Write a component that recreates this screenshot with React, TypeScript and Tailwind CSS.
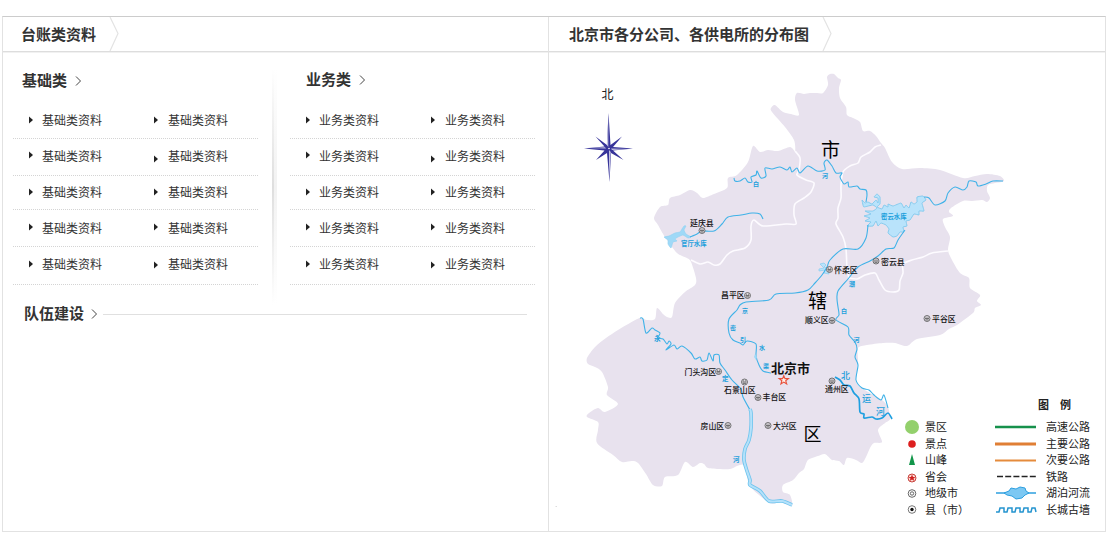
import type { ReactNode } from "react";

type Pt = [number, number];

const FONT =
  "font-['Liberation_Sans','Noto_Sans_CJK_SC',sans-serif]";

function parse(s: string): Pt[] {
  return s
    .trim()
    .split(/\s+/)
    .map((p) => p.split(",").map(Number) as Pt);
}

/* Smooth curve through every listed point. */
function curve(s: string, closed = false, tension = 0.14): string {
  const p = parse(s);
  const n = p.length;
  const at = (i: number): Pt =>
    closed ? p[(i + n) % n] : p[Math.max(0, Math.min(n - 1, i))];
  let d = `M${p[0][0]} ${p[0][1]}`;
  const last = closed ? n : n - 1;
  for (let i = 0; i < last; i++) {
    const a = at(i - 1);
    const b = at(i);
    const c = at(i + 1);
    const e = at(i + 2);
    d += `C${b[0] + (c[0] - a[0]) * tension} ${b[1] + (c[1] - a[1]) * tension} ${
      c[0] - (e[0] - b[0]) * tension
    } ${c[1] - (e[1] - b[1]) * tension} ${c[0]} ${c[1]}`;
  }
  return closed ? d + "Z" : d;
}

const OUTLINE = `830,74 834,74 838,78 841,80 839,88 840,98 846,107 847,115 853,118 860,122 863,131 870,131 876,136 881,143 885,148 892,162 902,169
920,168 940,170 963,178 975,176 987,174 1000,176 1004,181 995,183 988,185 987,191 990,198 987,202 982,200 972,201 963,201 951,208 949,212 953,216 943,219
945,227 950,237 948,250 952,260 960,273 969,278 970,288 980,295 977,301 981,305 975,308 973,313 957,325 949,329 940,335 917,339 907,346 895,343
883,343 867,345 858,348 858,360 857,371 856,382 862,388 870,393 882,400 888,407 890,419 885,423 878,430 882,442 874,443 870,448 866,457 862,463 856,460 847,458 844,465 839,461
832,460 825,454 818,456 808,460 804,469 799,473 793,480 783,485 783,492 790,495 792,506 780,502 770,503 750,486 744,465 730,469 720,469 708,468 704,464 700,463
693,467 685,462 678,475 665,477 662,486 653,485 646,474 638,463 632,461 622,462 613,455 597,443 598,430 598,422 587,417 589,413 598,408 605,412 618,404 607,395
608,387 602,372 595,367 588,364 587,358 595,347 606,338 618,330 630,323 640,318 647,320 655,319 657,308 663,314 667,317 672,317 675,303 685,292 695,285
696,278 691,262 687,258 677,253 665,237 658,225 654,218 660,207 668,205 670,198 680,195 690,190 697,193 703,198 714,194 727,188 728,178 737,175
748,162 753,146 760,152 768,150 778,151 790,147 795,151 794,140 785,127 772,112 771,108 775,105 783,112 791,114 799,115 795,100 797,93 804,94 810,93 817,93
823,93 828,85 827,77`;

const BORDERS = [
  "795,151 800,158 799,170 797,175 806,180 814,183 811,192 804,198 795,204 794,215 796,224 786,224 763,226 754,220 751,226 751,240 745,248 733,251 727,255 720,264 714,265 708,262 700,264 691,260",
  "881,145 875,147 870,152 861,157 858,163 850,166 843,172 841,185 841,198 838,208 838,218 836,224 843,237 846,249 847,268 849,278",
  "849,278 857,279 865,275 875,273 879,280 885,290 893,292 899,290 900,281 903,273 903,264 912,260 923,257 932,253 948,251",
];

const RIVERS = [
  "734,178 735,181 740,181 745,178 748,182 752,182 751,177 756,175 757,171 761,178 766,176 765,168 772,169 780,167 787,170 790,167 792,172 797,168 800,173 808,166 817,171 825,170 824,163 827,160 832,166 836,173 842,173 840,177 844,184 848,182 849,187 857,186 860,189 866,190 867,195 866,202",
  "924,197 929,198 935,205 945,201 948,193 955,187 963,190 967,187 969,181 976,182 978,186 986,184 993,181 1003,181",
  "690,237 697,234 702,231 714,231 722,224 728,217 741,215 752,213 760,214 763,219",
  "868,225 866,238 858,249 843,249 830,260 827,267 822,275 815,283 808,290 795,293 776,294 769,300 746,302 740,305 737,310 729,319 729,333 733,340 740,343 743,345 747,341 756,344 756,356 759,365 763,371 771,373",
  "905,230 898,240 894,248 886,249 878,256 870,261 858,267 848,279 838,291 837,299 838,307 839,315 836,320 848,327 849,335 855,342 857,349 855,357 858,365 856,380 862,388 869,390 874,395 881,400 884,395 888,408",
];

const YONGDING =
  "640,318 643,319 646,333 652,328 655,330 660,333 658,338 663,339 667,344 669,341 671,344 666,350 674,345 677,349 682,346 691,353 695,359 700,357 702,361 707,360 709,353 713,361 714,355 719,355 720,363 725,370 732,380 741,389 743,397 750,410";

const MIYUN =
  "863,205 862,200 865,203 868,202 872,204 876,200 878,203 878,198 874,197 877,194 880,197 880,204 877,207 882,209 884,205 888,207 888,204 893,206 901,203 904,208 906,205 909,208 911,202 914,204 917,202 917,197 923,196 926,200 922,203 924,211 919,211 919,215 914,214 910,220 906,221 907,226 903,227 904,232 900,232 897,236 893,237 888,233 889,229 886,225 881,223 878,226 876,221 873,226 867,226 871,222 865,221 870,218 864,216 871,214 865,211 873,211 877,208 873,205 864,207";

const GUANTING =
  "664,237 669,236 675,233 680,232 682,229 684,226 686,226 684,230 686,234 691,237 688,238 683,235 678,237 675,239 677,241 673,242 671,248 668,244 668,240";

function Mark({ x, y }: { x: number; y: number }) {
  return (
    <g fill="none" stroke="#555" strokeWidth="0.8">
      <circle cx={x} cy={y} r="3" fill="#dcd8de" />
      <path d={`M${x - 2} ${y}h4M${x - 1.5} ${y + 1.4}h3M${x - 1.4} ${y - 1.2}h.8m1.2 0h.8`} />
    </g>
  );
}

const PLACES: [string, number, number, number, number][] = [
  ["延庆县", 690, 225.5, 702, 230.5],
  ["怀柔区", 834, 273, 829.5, 269.5],
  ["密云县", 881, 264.5, 876, 261],
  ["昌平区", 721, 298, 747.5, 295.5],
  ["顺义区", 805, 322.5, 832, 320.5],
  ["平谷区", 932, 321.5, 927, 318.5],
  ["门头沟区", 684.5, 375, 718.5, 371.5],
  ["石景山区", 724, 392.5, 744.5, 382],
  ["丰台区", 762.5, 400, 758, 397.5],
  ["通州区", 825, 392, 832, 381],
  ["房山区", 700.5, 429, 728, 425.5],
  ["大兴区", 773, 428.5, 768, 425.5],
];

const WATER_TEXT: [string, number, number, number][] = [
  ["官厅水库", 681, 246, 6.4],
  ["密云水库", 881, 218.5, 6.4],
  ["白", 753, 186, 6],
  ["河", 822, 178, 6],
  ["潮", 849, 286, 6],
  ["白", 841, 313, 6],
  ["河", 853.5, 341.5, 6],
  ["京", 742, 313, 6],
  ["密", 730, 330, 6],
  ["引", 740, 342, 6],
  ["水", 759, 350, 6],
  ["渠", 763, 368, 6],
  ["永", 654, 341, 6.5],
  ["定", 722, 381, 6.5],
  ["河", 733, 462, 6.5],
  ["北", 841, 379, 9],
  ["运", 862, 402, 9],
  ["河", 876, 415, 9],
];

function BeijingMap() {
  return (
    <svg viewBox="549 53 556 478" className="block h-[478px] w-[556px]">
      <path d={curve(OUTLINE, true)} fill="#e8e2ee" />
      <g fill="none" stroke="#fdfbff" strokeWidth="1.6">
        {BORDERS.map((b) => (
          <path key={b} d={curve(b)} />
        ))}
      </g>
      <path d={curve(MIYUN, true, 0.06)} fill="#b9e3fb" stroke="#75c5ec" strokeWidth="0.8" />
      <path d={curve(GUANTING, true, 0.08)} fill="#9fd9f7" stroke="#8fd0f2" strokeWidth="0.6" />
      <path
        d="M820 264l4 -1 2 2 -2 2 4 1 1 6 -5 -1 1 -3 -6 1 0 -2 5 -1z"
        fill="#b9e3fb"
        stroke="#85cdf0"
        strokeWidth="0.7"
      />
      <g fill="none" stroke="#3fb2e8" strokeWidth="1.1" strokeLinejoin="round">
        {RIVERS.map((r) => (
          <path key={r} d={curve(r)} />
        ))}
        <path d={curve(YONGDING)} />
      </g>
      <g fill="none" strokeLinejoin="round">
        <path
          d={curve("750,409 751,413 751,428 749,440 745,449 744,460 747,471 750,480 750,485 760,491 769,501 782,501 792,505")}
          stroke="#6cc4ee"
          strokeWidth="3.6"
        />
        <path
          d={curve("750,409 751,413 751,428 749,440 745,449 744,460 747,471 750,480 750,485 760,491 769,501 782,501 792,505")}
          stroke="#b5e1fa"
          strokeWidth="2"
        />
        <path
          d={curve("835,377 840,380 844,385 850,386 854,393 859,399 860,412 864,414 864,418 872,417 876,419 882,418 888,413 892,419")}
          stroke="#1f9fe0"
          strokeWidth="1.7"
        />
      </g>
      <path d="M755 354l2 3 -1 3 -2 -3z" fill="#9fd9f7" />

      <g className={FONT}>
        {WATER_TEXT.map(([t, x, y, s]) => (
          <text key={`${x}-${y}`} x={x} y={y} fontSize={s} fill="#1c9fdc" fontWeight={s < 7 ? 700 : 500}>
            {t}
          </text>
        ))}
        {PLACES.map(([t, x, y, mx, my]) => (
          <g key={t}>
            <Mark x={mx} y={my} />
            <text x={x} y={y} fontSize="7.9" fill="#111" fontWeight="500">
              {t}
            </text>
          </g>
        ))}
        <text x="821" y="156.500" fontSize="19" fill="#000">市</text>
        <text x="808" y="308" fontSize="19" fill="#000">辖</text>
        <text x="803.500" y="441" fontSize="18" fill="#000">区</text>
        <text x="771" y="372.500" fontSize="13" fontWeight="700" fill="#111">北京市</text>
        <text x="601.500" y="98.500" fontSize="12" fill="#222">北</text>
      </g>
      <path
        d="M783.800 375.600l1.200 3h3.400l-2.700 2.100 1 3.300 -2.900 -1.900 -2.900 1.900 1 -3.300 -2.700 -2.100h3.400z"
        fill="#fff3ec"
        stroke="#e8503a"
        strokeWidth="1.1"
      />

      <path
        d="M608.500 113L610.500 145 622 136.500 613 147 633 148.500 613 150.500 623.500 160 611 153 609.500 182 607 153 596 160 604.500 150.500 584 148.500 604.500 146.500 595.500 136.500 607 145z"
        fill="#37349a"
      />
      <path
        d="M608.300 116V147L606.800 145zM609 181V150L610.800 152zM587 148.100L606 148.500 605 147.200zM630 148.900L611 148.500 612 149.900z"
        fill="#c3c2e2"
      />
      <circle cx="609" cy="148.500" r="0.800" fill="#fff" />
      <path d="M555.500 506.500h1.500" stroke="#ddd" />
    </svg>
  );
}

function Icon({ w, children }: { w: string; children: ReactNode }) {
  return <div className={`flex h-4 shrink-0 items-center justify-center ${w}`}>{children}</div>;
}

const SYMBOLS: [string, ReactNode][] = [
  ["景区", <circle cx="8" cy="8" r="7" fill="#93d06c" />],
  ["景点", <circle cx="8" cy="8" r="3.800" fill="#dd1f1f" />],
  ["山峰", <path d="M8 2l3 11h-6z" fill="#12964a" />],
  [
    "省会",
    <g>
      <circle cx="8" cy="9" r="4" fill="#fbdad4" stroke="#c8433c" />
      <path d="M8 5.500l1 2.400h2.500l-2 1.600 .8 2.500 -2.300 -1.500 -2.300 1.500 .8 -2.500 -2 -1.600h2.500z" fill="#cf1f1f" />
    </g>,
  ],
  [
    "地级市",
    <g fill="none" stroke="#555" strokeWidth="0.900">
      <circle cx="8" cy="8.500" r="3.800" />
      <circle cx="8" cy="8.500" r="1.700" />
    </g>,
  ],
  [
    "县（市）",
    <g>
      <circle cx="8" cy="7.500" r="3.800" fill="none" stroke="#666" strokeWidth="0.900" />
      <circle cx="8" cy="7.500" r="1.700" fill="#111" />
    </g>,
  ],
];

const LINES: [string, ReactNode][] = [
  ["高速公路", <path d="M0 8h41" stroke="#16914c" strokeWidth="2.600" />],
  ["主要公路", <path d="M0 8h41" stroke="#e07f35" strokeWidth="2.800" />],
  ["次要公路", <path d="M0 8.500h41" stroke="#e58b3c" strokeWidth="2" />],
  ["铁路", <path d="M2 7.500h40" stroke="#222" strokeWidth="1.600" strokeDasharray="6 2.200" />],
  [
    "湖泊河流",
    <g stroke="#2d9fdf">
      <path d="M1 8h40" strokeWidth="1.600" />
      <path d="M9 8l5 -2 2 -3 5 1 4 -2 5 1 1 3 3 2 -4 2 -3 3 -6 1 -4 -3 -5 -1z" fill="#7cc8f3" strokeWidth="1" />
    </g>,
  ],
  [
    "长城古墙",
    <path
      d="M1 10h3l1 -4h4v4h3l1 -4h4v4h3l1 -4h4v4h3l1 -4h4v4h3l1 -4h3l1 4"
      fill="none"
      stroke="#2494cf"
      strokeWidth="1.500"
    />,
  ],
];

function Legend() {
  return (
    <div className="absolute right-3 top-[344px] w-[190px] text-[11px] leading-4 text-[#222]">
      <div className="flex gap-[11px] pl-[135px] font-bold">
        <span>图</span>
        <span>例</span>
      </div>
      <div className="mt-[6px] flex">
        <div className="flex w-[92px] flex-col gap-[0.6px]">
          {SYMBOLS.map(([label, icon]) => (
            <div key={label} className="flex h-4 items-center gap-[4px] whitespace-nowrap">
              <Icon w="w-[18px]">
                <svg viewBox="0 0 16 16" className="size-4">{icon}</svg>
              </Icon>
              <span>{label}</span>
            </div>
          ))}
        </div>
        <div className="flex flex-col gap-[0.6px]">
          {LINES.map(([label, icon]) => (
            <div key={label} className="flex h-4 items-center gap-[9px] whitespace-nowrap">
              <Icon w="w-[42px]">
                <svg viewBox="0 0 42 16" className="h-4 w-[42px]">{icon}</svg>
              </Icon>
              <span>{label}</span>
            </div>
          ))}
        </div>
      </div>
    </div>
  );
}

function PanelHeader({ title, gap, pad }: { title: string; gap: string; pad: string }) {
  return (
    <div className={`mb-px flex h-[35px] items-center border-b border-[#ddd] shadow-[0_1px_0_#f1f1f1] ${pad}`}>
      <h2 className="whitespace-nowrap pt-[2px] text-[15px] font-bold leading-5">{title}</h2>
      <svg viewBox="0 0 10 34" className={`h-[34px] w-[10px] ${gap}`}>
        <path d="M1 0L9 16.500 1 34" fill="none" stroke="#e3e3e3" strokeWidth="1.200" />
      </svg>
    </div>
  );
}

function Chevron({ className }: { className: string }) {
  return (
    <svg viewBox="0 0 7 10" className={`h-[10px] w-[7px] ${className}`}>
      <path d="M1 .5L5.500 5 1 9.500" fill="none" stroke="#444" strokeWidth="1" />
    </svg>
  );
}

function Arrow({ className }: { className: string }) {
  return (
    <svg viewBox="0 0 4 8" className={`h-2 w-1 shrink-0 ${className}`}>
      <path d="M0 0.500L4 4 0 7.500z" fill="#222" />
    </svg>
  );
}

const ROWS = [
  { row: "h-[37px] pt-[11px]", left: "mt-[3px]", right: "mt-[3px]" },
  { row: "h-[37px] pt-[10px]", left: "mt-[2px]", right: "mt-[6px]" },
  { row: "h-[34px] pt-[9px]", left: "mt-[3px]", right: "mt-[3px]" },
  { row: "h-[37px] pt-[11px]", left: "mt-[2px]", right: "mt-[2px]" },
  { row: "h-[38px] pt-[10px]", left: "mt-[3px]", right: "mt-[4px]" },
];

function Category({
  title,
  item,
  head,
  inset,
}: {
  title: string;
  item: string;
  head: string;
  inset: string;
}) {
  return (
    <section className="w-[245px]">
      <div className={`flex h-[49px] items-start ${head}`}>
        <h3 className="text-[15px] font-bold leading-4">{title}</h3>
        <Chevron className="ml-[8px] mt-[3px]" />
      </div>
      <ul>
        {ROWS.map((r, i) => (
          <li key={i} className={`flex items-start border-b border-dotted border-[#d4d4d4] text-[12px] leading-4 ${inset} ${r.row}`}>
            <span className="flex w-[125px] items-start gap-[9px]">
              <Arrow className={r.left} />
              {item}
            </span>
            <span className="flex items-start gap-[10px]">
              <Arrow className={r.right} />
              {item}
            </span>
          </li>
        ))}
      </ul>
    </section>
  );
}

export default function App() {
  return (
    <div className={`h-[539px] w-[1109px] bg-white pl-[2px] pt-[16px] text-[#333] ${FONT}`}>
      <main className="flex h-[516px] w-[1104px] border border-[#e2e2e2] border-t-[#ccc]">
        <div className="flex w-[546px] flex-col border-r border-[#e2e2e2]">
          <PanelHeader title="台账类资料" pad="pl-[18px]" gap="ml-[13px]" />
          <div className="flex pl-[10px]">
            <Category title="基础类" item="基础类资料" head="pl-[9px] pt-[20px]" inset="pl-4" />
            <div className="mt-4 flex h-[236px] w-[32px] justify-center">
              <div className="h-full w-[2px] bg-linear-to-b from-white via-[#dedede] to-white" />
              <div className="h-full w-[3px] bg-linear-to-b from-white via-[#f2f2f2] to-white" />
            </div>
            <Category title="业务类" item="业务类资料" head="pl-[16px] pt-[19px]" inset="pl-4" />
          </div>
          <div className="flex items-center pl-[21px] pt-[1px]">
            <h3 className="text-[15px] font-bold leading-4">队伍建设</h3>
            <Chevron className="ml-[7px]" />
            <div className="ml-[5px] h-px w-[424px] bg-[#e0e0e0]" />
          </div>
        </div>
        <div className="flex w-[556px] flex-col">
          <PanelHeader title="北京市各分公司、各供电所的分布图" pad="pl-[20px]" gap="ml-[13px]" />
          <div className="relative h-[478px]">
            <BeijingMap />
            <Legend />
          </div>
        </div>
      </main>
    </div>
  );
}
